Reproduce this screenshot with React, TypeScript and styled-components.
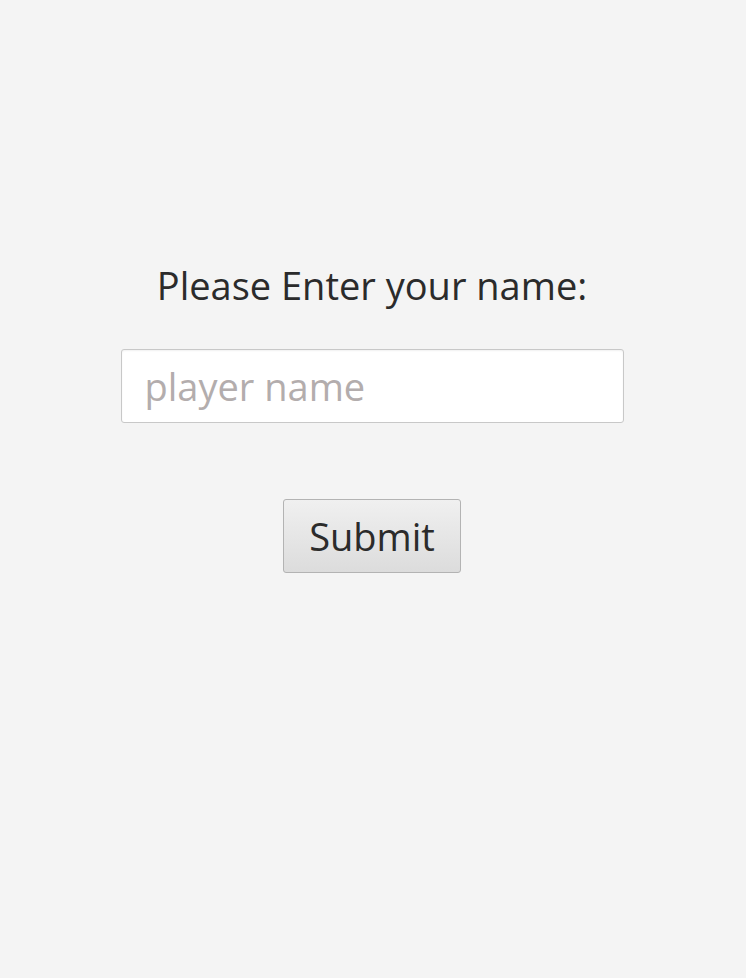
import React from "react";
import styled, { createGlobalStyle } from "styled-components";

const GlobalStyle = createGlobalStyle`
  html, body {
    margin: 0;
    padding: 0;
    background: #f4f4f4;
  }
  body {
    font-family: "Open Sans", "Noto Sans", sans-serif;
  }
`;

export default function App() {
  return (
    <>
      <GlobalStyle />
      <Page>
        <Form onSubmit={(e) => e.preventDefault()}>
          <Label htmlFor="player">Please Enter your name:</Label>
          <NameInput id="player" placeholder="player name" />
          <SubmitButton type="submit">Submit</SubmitButton>
        </Form>
      </Page>
    </>
  );
}

const Page = styled.div`
  width: 744px;
  height: 978px;
  display: flex;
  justify-content: center;
  padding-top: 260px;
  box-sizing: border-box;
`;

const Form = styled.form`
  display: flex;
  flex-direction: column;
  align-items: center;
`;

const Label = styled.label`
  font-size: 38px;
  line-height: 50px;
  color: #2b2b2b;
`;

const NameInput = styled.input`
  margin-top: 39px;
  width: 503px;
  height: 74px;
  box-sizing: border-box;
  border: 1px solid #c8c8c8;
  border-radius: 3px;
  background: #ffffff;
  box-shadow: inset 0 1px 2px rgba(0, 0, 0, 0.06);
  padding: 0 23px;
  font-family: inherit;
  font-size: 38px;
  color: #2b2b2b;
  outline: none;

  &::placeholder {
    color: #b3adad;
  }
`;

const SubmitButton = styled.button`
  margin-top: 76px;
  width: 178px;
  height: 74px;
  box-sizing: border-box;
  border: 1px solid #b3b3b3;
  border-radius: 3px;
  background: linear-gradient(to bottom, #f0f0f0, #dcdcdc);
  font-family: inherit;
  font-size: 38px;
  color: #2b2b2b;
  padding: 0;
  cursor: pointer;
`;
